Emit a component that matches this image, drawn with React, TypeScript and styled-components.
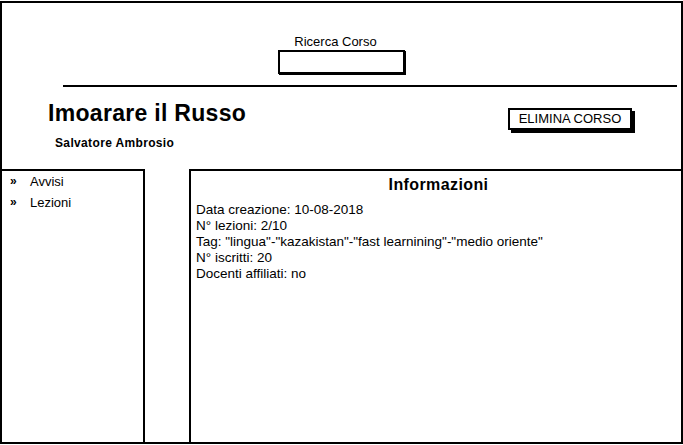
import React from 'react';
import styled, { createGlobalStyle } from 'styled-components';

const GlobalStyle = createGlobalStyle`
  html, body {
    margin: 0;
    padding: 0;
    background: #fff;
  }
  body {
    font-family: 'Liberation Sans', Arial, sans-serif;
    color: #000;
  }
`;

const infoLines = [
  'Data creazione: 10-08-2018',
  'N° lezioni: 2/10',
  'Tag: "lingua"-"kazakistan"-"fast learnining"-"medio oriente"',
  'N° iscritti: 20',
  'Docenti affiliati: no',
];

const menuItems = ['Avvisi', 'Lezioni'];

const App: React.FC = () => {
  return (
    <>
      <GlobalStyle />
      <Frame>
        <Header>
          <Search>
            <SearchLabel>Ricerca Corso</SearchLabel>
            <SearchInput />
          </Search>
          <Rule />
          <TitleRow>
            <div>
              <CourseTitle>Imoarare il Russo</CourseTitle>
              <Author>Salvatore Ambrosio</Author>
            </div>
            <DeleteButton>ELIMINA CORSO</DeleteButton>
          </TitleRow>
        </Header>
        <Body>
          <SideMenu>
            {menuItems.map((item) => (
              <MenuItem key={item}>
                <Chevron>»</Chevron>
                {item}
              </MenuItem>
            ))}
          </SideMenu>
          <InfoPanel>
            <InfoTitle>Informazioni</InfoTitle>
            {infoLines.map((line) => (
              <InfoLine key={line}>{line}</InfoLine>
            ))}
          </InfoPanel>
        </Body>
      </Frame>
    </>
  );
};

const ink = '#000';

const Frame = styled.div`
  box-sizing: border-box;
  width: 683px;
  height: 443px;
  margin-top: 1px;
  border: 2px solid ${ink};
  display: flex;
  flex-direction: column;
`;

const Header = styled.div`
  height: 166px;
  display: flex;
  flex-direction: column;
`;

const Search = styled.div`
  display: flex;
  flex-direction: column;
  align-items: center;
  padding-top: 32px;
`;

const SearchLabel = styled.div`
  font-size: 13px;
  line-height: 14px;
  margin-right: 12px;
`;

const SearchInput = styled.div`
  box-sizing: border-box;
  width: 127px;
  height: 24px;
  margin-top: 1px;
  border: 2px solid ${ink};
  box-shadow: 1px 1px 0 ${ink};
`;

const Rule = styled.div`
  height: 2px;
  background: ${ink};
  margin: 11px 4px 0 61px;
`;

const TitleRow = styled.div`
  display: flex;
  justify-content: space-between;
  align-items: flex-start;
  padding: 13px 49px 0 46px;
`;

const CourseTitle = styled.div`
  font-size: 23px;
  line-height: 26px;
  font-weight: bold;
  letter-spacing: 0.3px;
`;

const Author = styled.div`
  font-size: 12px;
  line-height: 14px;
  font-weight: bold;
  letter-spacing: 0.35px;
  margin: 10px 0 0 7px;
`;

const DeleteButton = styled.div`
  box-sizing: border-box;
  margin-top: 8px;
  height: 22px;
  width: 124px;
  border: 2px solid ${ink};
  box-shadow: 3px 3px 0 ${ink};
  font-size: 13px;
  line-height: 18px;
  text-align: center;
`;

const Body = styled.div`
  flex: 1;
  display: flex;
  gap: 44px;
`;

const SideMenu = styled.div`
  width: 133px;
  border-top: 2px solid ${ink};
  border-right: 2px solid ${ink};
  padding-left: 8px;
`;

const MenuItem = styled.div`
  display: flex;
  font-size: 13px;
  line-height: 21px;
`;

const Chevron = styled.span`
  width: 20px;
  font-size: 12px;
  font-weight: bold;
`;

const InfoPanel = styled.div`
  flex: 1;
  border-top: 2px solid ${ink};
  border-left: 2px solid ${ink};
  padding: 4px 0 0 5px;
`;

const InfoTitle = styled.div`
  font-size: 16px;
  line-height: 20px;
  font-weight: bold;
  letter-spacing: 0.4px;
  text-align: center;
  margin-bottom: 7px;
`;

const InfoLine = styled.div`
  font-size: 13.5px;
  line-height: 16px;
`;

export default App;
